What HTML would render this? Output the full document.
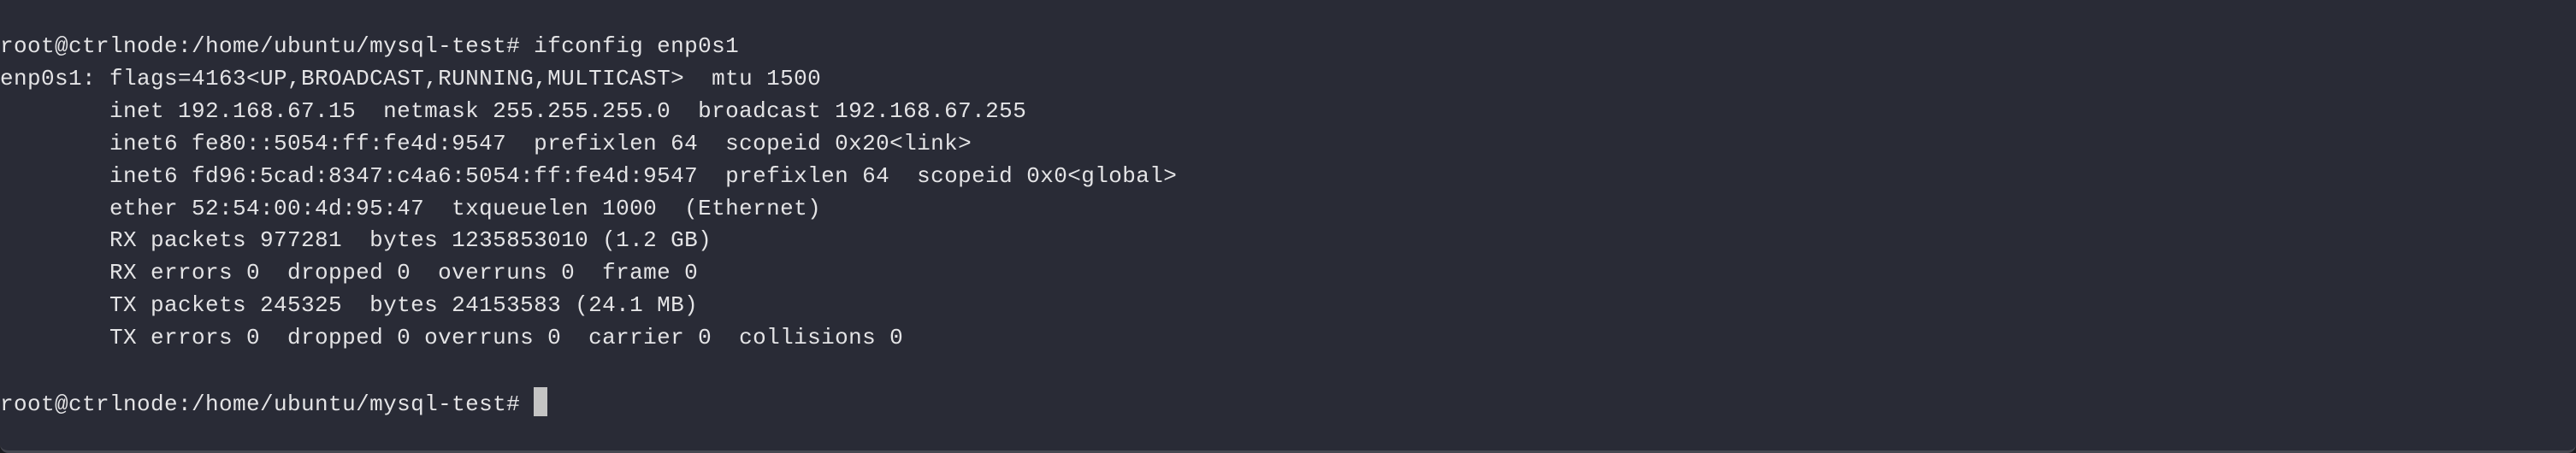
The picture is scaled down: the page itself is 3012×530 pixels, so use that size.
<!DOCTYPE html>
<html><head><meta charset="utf-8"><style>
html,body{margin:0;padding:0;}
body{width:3012px;height:530px;background:#1c1d22;overflow:hidden;}
.term{position:absolute;left:0;top:0;width:3012px;height:527px;background:#292b36;border-radius:0 0 10px 10px;border-bottom:3px solid #454750;box-sizing:content-box;}
pre{margin:0;position:absolute;left:0;top:36px;font-family:"Liberation Mono",monospace;font-size:26px;letter-spacing:0.4px;line-height:37.9px;color:#e4e4e6;}
.cur{display:inline-block;width:16px;height:34px;background:#c4c4c4;vertical-align:-7px;}
</style></head><body><div class="term"><pre>root@ctrlnode:/home/ubuntu/mysql-test# ifconfig enp0s1
enp0s1: flags=4163&lt;UP,BROADCAST,RUNNING,MULTICAST&gt;  mtu 1500
        inet 192.168.67.15  netmask 255.255.255.0  broadcast 192.168.67.255
        inet6 fe80::5054:ff:fe4d:9547  prefixlen 64  scopeid 0x20&lt;link&gt;
        inet6 fd96:5cad:8347:c4a6:5054:ff:fe4d:9547  prefixlen 64  scopeid 0x0&lt;global&gt;
        ether 52:54:00:4d:95:47  txqueuelen 1000  (Ethernet)
        RX packets 977281  bytes 1235853010 (1.2 GB)
        RX errors 0  dropped 0  overruns 0  frame 0
        TX packets 245325  bytes 24153583 (24.1 MB)
        TX errors 0  dropped 0 overruns 0  carrier 0  collisions 0

root@ctrlnode:/home/ubuntu/mysql-test# <span class="cur"></span></pre></div></body></html>
